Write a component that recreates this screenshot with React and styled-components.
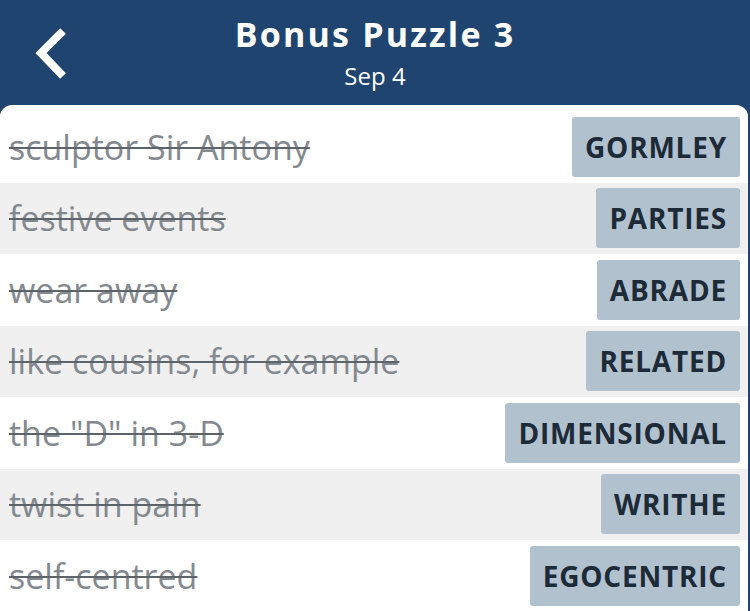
import React from "react";
import styled, { createGlobalStyle } from "styled-components";

const Global = createGlobalStyle`
  html, body {
    margin: 0;
    padding: 0;
    background: #1f4470;
    font-family: "Open Sans", Lato, sans-serif;
    overflow: hidden;
  }
`;

const Page = styled.div`
  width: 750px;
  height: 611px;
  display: flex;
  flex-direction: column;
  background: #1f4470;
`;

const Header = styled.header`
  height: 105px;
  display: flex;
  flex-direction: column;
  align-items: center;
  position: relative;
  color: #fff;
`;

const Title = styled.h1`
  margin: 14px 0 0;
  font-size: 34px;
  font-weight: 700;
  line-height: 40px;
  letter-spacing: 2.2px;
`;

const Sub = styled.div`
  font-size: 24px;
  line-height: 28px;
  margin-top: 8px;
`;

const Back = styled.button`
  position: absolute;
  left: 30px;
  top: 26px;
  width: 44px;
  height: 56px;
  border: none;
  background: none;
  padding: 0;
  cursor: pointer;
`;

const Card = styled.div`
  flex: 1;
  margin-right: 2px;
  background: #fff;
  border-radius: 12px 12px 0 0;
  padding-top: 6px;
  overflow: hidden;
`;

const Row = styled.div`
  height: 71.5px;
  display: flex;
  align-items: center;
  justify-content: space-between;
  padding: 0 8px 0 9px;
  background: ${(p) => (p.$shade ? "#f0f0f0" : "#fff")};
`;

const Clue = styled.span`
  font-size: 34px;
  color: #83898f;
  text-decoration: line-through;
  text-decoration-color: #5c6469;
  text-decoration-thickness: 2px;
`;

const Answer = styled.span`
  height: 60px;
  display: flex;
  align-items: center;
  padding: 0 13px;
  background: #b1c1ce;
  border-radius: 3px;
  color: #1d2a38;
  font-size: 28px;
  font-weight: 700;
  letter-spacing: 0.8px;
`;

const items = [
  ["sculptor Sir Antony", "GORMLEY"],
  ["festive events", "PARTIES"],
  ["wear away", "ABRADE"],
  ["like cousins, for example", "RELATED"],
  ['the "D" in 3-D', "DIMENSIONAL"],
  ["twist in pain", "WRITHE"],
  ["self-centred", "EGOCENTRIC"],
];

export default function App() {
  return (
    <Page>
      <Global />
      <Header>
        <Back aria-label="back">
          <svg width="44" height="56" viewBox="0 0 44 56">
            <path d="M33 5 L11 27 L33 50" fill="none" stroke="#fff" strokeWidth="8" />
          </svg>
        </Back>
        <Title>Bonus Puzzle 3</Title>
        <Sub>Sep 4</Sub>
      </Header>
      <Card>
        {items.map(([clue, answer], i) => (
          <Row key={answer} $shade={i % 2 === 1}>
            <Clue>{clue}</Clue>
            <Answer>{answer}</Answer>
          </Row>
        ))}
      </Card>
    </Page>
  );
}
